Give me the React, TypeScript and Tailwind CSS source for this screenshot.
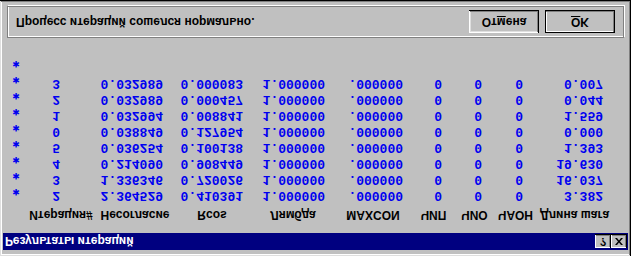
import React from "react";

const rows = [
  ["2", "2.364529", "0.410391", "1.000000", ".000000", "0", "0", "0", "3.382"],
  ["3", "1.336346", "0.720026", "1.000000", ".000000", "0", "0", "0", "16.037"],
  ["4", "0.214090", "0.908449", "1.000000", ".000000", "0", "0", "0", "19.630"],
  ["5", "0.036254", "0.100138", "1.000000", ".000000", "0", "0", "0", "1.393"],
  ["0", "0.038849", "0.127954", "1.000000", ".000000", "0", "0", "0", "0.000"],
  ["1", "0.032994", "0.008841", "1.000000", ".000000", "0", "0", "0", "1.559"],
  ["2", "0.032989", "0.000457", "1.000000", ".000000", "0", "0", "0", "0.044"],
  ["3", "0.032989", "0.000083", "1.000000", ".000000", "0", "0", "0", "0.007"],
];

const headers = ["Итерация#", "Несогласие", "Rcos", "Лямбда", "MAXCON", "ЧИП", "ЧИО", "ЧАОН", "Длина шага"];

// column widths and right padding of the values
const cols = [
  { w: "w-[74px]", pr: "pr-[38px]" },
  { w: "w-[74px]", pr: "pr-[9px]" },
  { w: "w-[80px]", pr: "pr-[9px]" },
  { w: "w-[82px]", pr: "pr-[9px]" },
  { w: "w-[78px]", pr: "pr-[9px]" },
  { w: "w-[43px]", pr: "pr-[13px]" },
  { w: "w-[39px]", pr: "pr-[12px]" },
  { w: "w-[43px]", pr: "pr-[14px]" },
  { w: "w-[75px]", pr: "pr-[9px]" },
];

const sans = "font-['Liberation_Sans',Arial,sans-serif]";
const mono = "font-['Liberation_Mono','Courier_New',monospace]";

function WinButton({ children, isDefault }: { children: React.ReactNode; isDefault?: boolean }) {
  return (
    <div
      className={`w-[70px] h-[23px] flex items-center justify-center bg-[#c0c0c0] text-[12px] font-bold text-black ${sans} ${
        isDefault
          ? "shadow-[inset_-1px_-1px_#000,inset_1px_1px_#000,inset_-2px_-2px_#808080,inset_2px_2px_#fff]"
          : "shadow-[inset_-1px_-1px_#000,inset_1px_1px_#fff,inset_-2px_-2px_#808080,inset_2px_2px_#dfdfdf]"
      }`}
    >
      {children}
    </div>
  );
}

function Star() {
  return (
    <div className="w-[16px] h-[16px] pt-[6px] leading-[10px] text-center text-[9px] text-[#0000f0] font-['DejaVu_Sans',sans-serif]">
      ✱
    </div>
  );
}

export default function App() {
  return (
    <div className="w-[631px] h-[256px] overflow-hidden bg-[#c0c0c0] -scale-y-100">
      <div className="w-full h-full flex flex-col p-[3px] shadow-[inset_-1px_-1px_#000,inset_1px_1px_#dfdfdf,inset_-2px_-2px_#808080,inset_2px_2px_#fff]">
        {/* title bar */}
        <div className="mt-[3px] h-[17px] shrink-0 bg-[#000080] flex items-center justify-between pl-[2px] pr-[1px]">
          <span className={`text-white text-[12px] font-bold leading-none ${sans}`}>Результаты итераций</span>
          <div className="flex">
            <div className={`w-[16px] h-[14px] bg-[#c0c0c0] flex items-center justify-center text-[11px] font-bold text-black leading-none ${sans} shadow-[inset_-1px_-1px_#000,inset_1px_1px_#fff,inset_-2px_-2px_#808080]`}>
              ?
            </div>
            <div className="w-[16px] h-[14px] bg-[#c0c0c0] flex items-center justify-center shadow-[inset_-1px_-1px_#000,inset_1px_1px_#fff,inset_-2px_-2px_#808080]">
              <svg width="8" height="7" viewBox="0 0 8 7">
                <path d="M0 0h2l2 2.5L6 0h2L5 3.5 8 7H6L4 4.5 2 7H0l3-3.5z" fill="#000" />
              </svg>
            </div>
          </div>
        </div>

        {/* table */}
        <div className="ml-[5px] mt-[10px] flex flex-col">
          <div className={`flex h-[16px] items-center text-[12px] font-bold text-black ${sans}`}>
            <div className="w-[16px]" />
            {headers.map((h, i) => (
              <div key={h} className={`${cols[i].w} text-center whitespace-nowrap`}>
                {h}
              </div>
            ))}
          </div>
          <div className="mt-[4px] flex flex-col">
            {rows.map((r, ri) => (
              <div key={ri} className={`flex h-[16px] items-center text-[13px] leading-[16px] font-bold text-[#0000f0] ${mono}`}>
                <Star />
                {r.map((v, i) => (
                  <div key={i} className={`${cols[i].w} ${cols[i].pr} text-right whitespace-nowrap`}>
                    {v}
                  </div>
                ))}
              </div>
            ))}
            <div className="flex h-[16px] items-center">
              <Star />
            </div>
          </div>
        </div>

        {/* message panel */}
        <div className="mx-[4px] mt-auto mb-[3px] h-[32px] flex items-center justify-between pl-[8px] pr-[8px] border border-[#808080] shadow-[inset_1px_1px_#fff,1px_1px_#fff]">
          <span className={`text-[12px] font-bold text-black ${sans}`}>Процесс итераций сошелся нормально.</span>
          <div className="flex gap-[6px]">
            <WinButton>
              От<span className="underline">м</span>ена
            </WinButton>
            <WinButton isDefault>
              <span className="underline">O</span>K
            </WinButton>
          </div>
        </div>
      </div>
    </div>
  );
}
